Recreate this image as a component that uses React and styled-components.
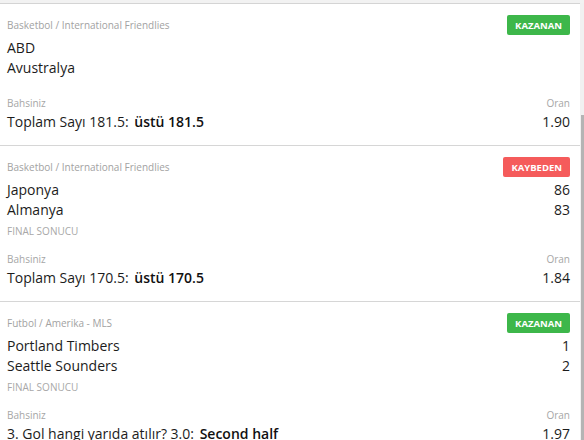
import React from 'react'
import styled, { createGlobalStyle } from 'styled-components'

const bets = [
	{
		category: 'Basketbol / International Friendlies',
		status: 'win',
		teams: [ { name: 'ABD' }, { name: 'Avustralya' } ],
		market: 'Toplam Sayı 181.5:',
		pick: 'üstü 181.5',
		odds: '1.90',
	},
	{
		category: 'Basketbol / International Friendlies',
		status: 'lose',
		teams: [ { name: 'Japonya', score: 86 }, { name: 'Almanya', score: 83 } ],
		result: 'FINAL SONUCU',
		market: 'Toplam Sayı 170.5:',
		pick: 'üstü 170.5',
		odds: '1.84',
	},
	{
		category: 'Futbol / Amerika - MLS',
		status: 'win',
		teams: [ { name: 'Portland Timbers', score: 1 }, { name: 'Seattle Sounders', score: 2 } ],
		result: 'FINAL SONUCU',
		market: '3. Gol hangi yarıda atılır? 3.0:',
		pick: 'Second half',
		odds: '1.97',
	},
]

const STATUS = {
	win: { label: 'KAZANAN', color: '#3db74a' },
	lose: { label: 'KAYBEDEN', color: '#f55b5b' },
}

const App = () => (
	<>
		<GlobalStyle />
		<Screen>
			<Panel>
			{
				bets.map((bet, i) => (
					<Card key={ i }>
						<Header>
							<Category>{ bet.category }</Category>
							<Badge color={ STATUS[bet.status].color }>{ STATUS[bet.status].label }</Badge>
						</Header>
						<Teams>
						{
							bet.teams.map(team => (
								<TeamRow key={ team.name }>
									<span>{ team.name }</span>
									<span>{ team.score }</span>
								</TeamRow>
							))
						}
						</Teams>
						{ bet.result && <Result>{ bet.result }</Result> }
						<Bet>
							<BetRow>
								<Label>Bahsiniz</Label>
								<Label>Oran</Label>
							</BetRow>
							<BetRow gap>
								<Value>{ bet.market } <Pick>{ bet.pick }</Pick></Value>
								<Value>{ bet.odds }</Value>
							</BetRow>
						</Bet>
					</Card>
				))
			}
			</Panel>
			<ScrollTrack>
				<ScrollThumb />
			</ScrollTrack>
		</Screen>
	</>
)

const GlobalStyle = createGlobalStyle`
	html, body {
		margin: 0;
		padding: 0;
		background: #f2f2f2;
		font-family: "Open Sans", "Noto Sans", sans-serif;
	}
	#root {
		height: 440px;
		overflow: hidden;
	}
`

const Screen = styled.div`
	display: flex;
	height: 437px;
	margin-top: 3px;
`

const Panel = styled.main`
	width: 580px;
	background: #fff;
	border-top: 1px solid #d4d4d4;
	overflow: hidden;
`

const Card = styled.section`
	padding: 11px 10px 13px 7px;
	border-bottom: 1px solid #d6d6d6;
`

const Header = styled.div`
	display: flex;
	justify-content: space-between;
	align-items: center;
	height: 20px;
`

const Category = styled.span`
	font-size: 10px;
	color: #a2a2a2;
`

const Badge = styled.span`
	display: inline-flex;
	align-items: center;
	height: 20px;
	padding: 0 8px;
	border-radius: 2px;
	background: ${ ({ color }) => color };
	color: #fff;
	font-size: 9.5px;
	font-weight: 700;
`

const Teams = styled.div`
	margin-top: 3px;
`

const TeamRow = styled.div`
	display: flex;
	justify-content: space-between;
	font-size: 14px;
	line-height: 20px;
	color: #1c1c1c;
`

const Result = styled.div`
	padding-top: 4px;
	margin-bottom: -4px;
	font-size: 10px;
	line-height: 14px;
	color: #a8a8a8;
`

const Bet = styled.div`
	margin-top: 18px;
`

const BetRow = styled.div`
	display: flex;
	justify-content: space-between;
	align-items: baseline;
	margin-top: ${ ({ gap }) => gap ? 2 : 0 }px;
`

const Label = styled.span`
	font-size: 10px;
	line-height: 14px;
	color: #a6a6a6;
`

const Value = styled.span`
	font-size: 14px;
	line-height: 20px;
	color: #1c1c1c;
`

const Pick = styled.strong`
	font-weight: 600;
	margin-left: 2px;
	color: #111;
`

const ScrollTrack = styled.div`
	width: 4px;
	background: #f1f1f1;
`

const ScrollThumb = styled.div`
	margin: 112px 0 0 1px;
	height: 330px;
	background: #b4b4b4;
`

export default App
